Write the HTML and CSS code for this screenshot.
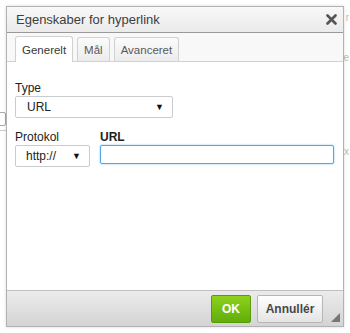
FILE: index.html
```html
<!DOCTYPE html>
<html lang="da">

<head>
    <meta charset="UTF-8">
    <title>Egenskaber for hyperlink</title>
    <link rel="stylesheet" href="styles.css">
</head>

<body>
    <!-- Editor page behind the dialog -->
    <div class="backdrop">
        <span class="bg-tool"></span>
        <span class="bg-line"></span>
        <span class="bg-text t1">r</span>
        <span class="bg-text t2">e</span>
        <span class="bg-text t3">x</span>
    </div>

    <div class="dialog">
        <div class="dialog-title">
            <span>Egenskaber for hyperlink</span>
            <svg class="close" width="11" height="11" viewBox="0 0 11 11">
                <path d="M1.5 1.5 L9.5 9.5 M9.5 1.5 L1.5 9.5" stroke="#555" stroke-width="2.6" stroke-linecap="round"/>
            </svg>
        </div>

        <div class="tabs">
            <a href="#" class="tab active">Generelt</a>
            <a href="#" class="tab">Mål</a>
            <a href="#" class="tab">Avanceret</a>
        </div>

        <div class="dialog-body">
            <div class="field">
                <label>Type</label>
                <div class="select wide">URL<span class="arrow">&#9660;</span></div>
            </div>

            <div class="row">
                <div class="field">
                    <label>Protokol</label>
                    <div class="select small">http://<span class="arrow">&#9660;</span></div>
                </div>
                <div class="field grow">
                    <label class="bold">URL</label>
                    <input type="text" class="url-input">
                </div>
            </div>
        </div>

        <div class="dialog-footer">
            <button class="btn ok">OK</button>
            <button class="btn cancel">Annullér</button>
            <span class="resize"></span>
        </div>
    </div>
</body>

</html>
```

FILE: styles.css
```css
* {
    box-sizing: border-box;
    margin: 0;
    padding: 0;
    font-family: Arial, "Liberation Sans", sans-serif;
}

body {
    width: 350px;
    height: 333px;
    background: #fff;
    position: relative;
    overflow: hidden;
}

/* faint editor content behind */
.backdrop {
    position: absolute;
    inset: 0;
}

.bg-tool {
    position: absolute;
    left: -2px;
    top: 112px;
    width: 8px;
    height: 14px;
    border: 1px solid #aaa;
    border-radius: 2px;
}

.bg-line {
    position: absolute;
    left: 0;
    top: 130px;
    width: 6px;
    height: 1px;
    background: #ccc;
}

.bg-text {
    position: absolute;
    right: 1px;
    font-size: 10px;
    color: #bbb;
}

.t1 { top: 12px; }
.t2 { top: 52px; }
.t3 { top: 146px; }

/* Dialog */

.dialog {
    position: absolute;
    left: 6px;
    top: 6px;
    width: 338px;
    height: 321px;
    border: 1px solid #b2b2b2;
    box-shadow: 0 0 3px rgba(0, 0, 0, 0.15);
    display: flex;
    flex-direction: column;
    background: #fff;
}

.dialog-title {
    height: 26px;
    padding: 0 6px 0 9px;
    display: flex;
    align-items: center;
    justify-content: space-between;
    background: linear-gradient(#f8f8f8, #ebebeb);
    border-bottom: 1px solid #999;
    font-size: 13px;
    color: #3e3e3e;
}

.tabs {
    height: 29px;
    display: flex;
    align-items: flex-end;
    gap: 4px;
    padding-left: 8px;
    background: #f8f8f8;
    border-bottom: 1px solid #d1d1d1;
}

.tab {
    height: 24px;
    padding: 0 6px;
    display: flex;
    align-items: center;
    text-decoration: none;
    font-size: 11.5px;
    color: #595959;
    background: linear-gradient(#fbfbfb, #ececec);
    border: 1px solid #d1d1d1;
    border-bottom: none;
    border-radius: 3px 3px 0 0;
}

.tab.active {
    height: 26px;
    margin-bottom: -1px;
    padding: 0 6px;
    background: #fff;
    color: #383838;
}

.dialog-body {
    flex: 1;
    padding: 20px 8px 0 8px;
    display: flex;
    flex-direction: column;
    gap: 13px;
}

.field {
    display: flex;
    flex-direction: column;
    gap: 1px;
}

.field label {
    font-size: 12px;
    line-height: 13px;
    color: #222;
}

.field label.bold {
    font-weight: bold;
}

.row {
    display: flex;
    gap: 10px;
}

.grow {
    flex: 1;
}

.select {
    height: 22px;
    border: 1px solid #c9cccf;
    border-radius: 2px;
    padding: 0 8px 0 11px;
    display: flex;
    align-items: center;
    justify-content: space-between;
    font-size: 12px;
    color: #222;
    background: #fff;
}

.select.wide {
    width: 158px;
}

.select.small {
    width: 75px;
    padding: 0 8px 0 10px;
}

.arrow {
    font-size: 9px;
    color: #111;
}

.url-input {
    height: 19px;
    border: 1px solid #51a7e8;
    border-radius: 2px;
    box-shadow: 0 0 2px #7cbdf0;
    outline: none;
    width: 234px;
}

.dialog-footer {
    height: 36px;
    display: flex;
    align-items: center;
    justify-content: flex-end;
    gap: 6px;
    padding-right: 20px;
    background: linear-gradient(#ebebeb, #d4d4d4);
    border-top: 1px solid #bfbfbf;
    position: relative;
}

.btn {
    height: 28px;
    border-radius: 2px;
    font-size: 12px;
    font-weight: bold;
    cursor: pointer;
}

.btn.ok {
    width: 40px;
    color: #fff;
    background: linear-gradient(#8fd11d, #5fae0a);
    border: 1px solid #5b9a0b;
}

.btn.cancel {
    width: 66px;
    color: #474747;
    background: linear-gradient(#fff, #e4e4e4);
    border: 1px solid #b6b6b6;
}

.resize {
    position: absolute;
    right: 3px;
    bottom: 4px;
    width: 0;
    height: 0;
    border-left: 9px solid transparent;
    border-bottom: 9px solid #777;
}
```
